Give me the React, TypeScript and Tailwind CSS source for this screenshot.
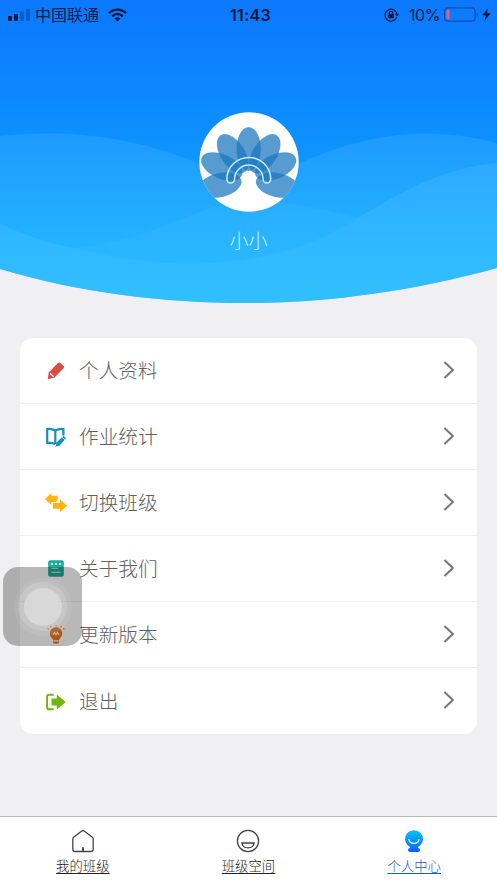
import type { ReactNode } from "react";

interface MenuItem {
  label: string;
  icon: ReactNode;
}

const menuItems: MenuItem[] = [
  { label: "个人资料", icon: <PencilIcon /> },
  { label: "作业统计", icon: <BookIcon /> },
  { label: "切换班级", icon: <SwitchIcon /> },
  { label: "关于我们", icon: <NoteIcon /> },
  { label: "更新版本", icon: <BulbIcon /> },
  { label: "退出", icon: <ExitIcon /> },
];

export default function App() {
  return (
    <div className="relative flex h-[883px] w-[497px] flex-col overflow-hidden bg-[#f0f0f2] font-['Noto_Sans_CJK_SC',sans-serif]">
      <header className="relative flex h-[304px] flex-col">
        <HeaderWaves />
        <StatusBar />
        <div className="relative mt-[84px] flex flex-col items-center">
          <Avatar />
          <div className="mt-[14px] text-[19px] leading-7 font-light text-[#c4f4ff]">小小</div>
        </div>
      </header>

      <main className="flex-1 px-5 pt-[34px]">
        <ul className="overflow-hidden rounded-[13px] bg-white">
          {menuItems.map((item) => (
            <li
              key={item.label}
              className="flex h-[66px] items-center border-b border-[#efeff1] pr-[21px] pl-6 last:border-b-0"
            >
              <span className="flex w-6 justify-center">{item.icon}</span>
              <span className="mb-px ml-[11px] flex-1 text-[19.7px] leading-none font-light text-[#606060]">
                {item.label}
              </span>
              <svg className="mb-[2px]" width="14" height="20" viewBox="0 0 14 20" fill="none" stroke="#777" strokeWidth="2">
                <path d="M2.5 2 L10.8 10 L2.5 18" />
              </svg>
            </li>
          ))}
        </ul>
      </main>

      <nav className="grid h-[67px] grid-cols-3 border-t border-[#bcbcbc] bg-white text-[13.4px] text-[#222]">
        <Tab label="我的班级" icon={<HomeIcon />} />
        <Tab label="班级空间" icon={<SmileIcon />} />
        <Tab label="个人中心" icon={<ProfileIcon />} active />
      </nav>

      <AssistiveTouch />
    </div>
  );
}

function Tab({ label, icon, active = false }: { label: string; icon: ReactNode; active?: boolean }) {
  return (
    <a className={`flex flex-col items-center pt-3 ${active ? "text-[#1458dc]" : ""}`}>
      {icon}
      <span className="mt-[2px] leading-5 font-light underline underline-offset-2">{label}</span>
    </a>
  );
}

function StatusBar() {
  return (
    <div className="relative grid h-7 grid-cols-3 items-center pr-[6px] pl-2 text-[#04214f]">
      <div className="flex items-center">
        <svg width="23" height="14" viewBox="0 0 23 14">
          <rect x="0" y="8" width="4" height="5" rx="1" fill="#04183c" />
          <rect x="6" y="6" width="4" height="7" rx="1" fill="#04183c" />
          <rect x="12" y="3.5" width="4" height="9.5" rx="1" fill="#0860cb" />
          <rect x="18" y="1" width="4" height="12" rx="1" fill="#0860cb" />
        </svg>
        <span className="mb-px ml-1 text-[16px] leading-7">中国联通</span>
        <svg className="ml-[9px]" width="19" height="14" viewBox="0 0 19 14" fill="none" stroke="#04183c" strokeWidth="2.4">
          <path d="M1 5.2 C5.8 .4 13.2 .4 18 5.2" />
          <path d="M4.2 8.3 C7.3 5.3 11.7 5.3 14.8 8.3" />
          <path d="M6.6 10.6 Q9.5 8.1 12.4 10.6 L9.5 13.5 Z" fill="#04183c" stroke="none" />
        </svg>
      </div>
      <div className="pl-[2px] text-center font-['Inter',sans-serif] text-[16px] font-semibold tracking-[0.3px] text-[#04183c]">
        11:43
      </div>
      <div className="flex items-center justify-end">
        <svg width="16" height="14" viewBox="0 0 16 14" fill="none" stroke="#04183c" strokeWidth="1.2">
          <path d="M12.7 9.2 A6 6 0 1 1 13 6.5" />
          <path d="M10.8 5.7 H15.2 L13 8.6 Z" fill="#04183c" stroke="none" />
          <rect x="4.3" y="6" width="5.4" height="4.2" rx=".5" fill="#04183c" stroke="none" />
          <path d="M5.3 6.5 V5 A1.7 1.7 0 0 1 8.7 5 V6.5" />
        </svg>
        <span className="ml-[9px] font-['Inter',sans-serif] text-[16px] tracking-[-0.4px]">10%</span>
        <svg className="ml-1" width="36" height="15" viewBox="0 0 36 15">
          <rect x=".6" y=".8" width="30.5" height="13.4" rx="3.4" fill="none" stroke="#0b4fa8" strokeWidth="1.2" />
          <path d="M32.6 5 Q35.4 7.5 32.6 10 Z" fill="#0b4fa8" />
          <path d="M5.5 2.7 V12.3 H4.2 Q2.4 12.3 2.4 10.5 V4.5 Q2.4 2.7 4.2 2.7 Z" fill="#e2607d" />
        </svg>
        <svg className="ml-[2px]" width="9" height="13" viewBox="0 0 9 13">
          <path d="M6.2 0 L.4 7.2 H3.8 L2.6 13 L8.6 5.3 H5 Z" fill="#04183c" />
        </svg>
      </div>
    </div>
  );
}

function HeaderWaves() {
  return (
    <svg className="absolute inset-0" width="497" height="304" viewBox="0 0 497 304">
      <defs>
        <linearGradient id="sky" x1="0" y1="0" x2="0" y2="304" gradientUnits="userSpaceOnUse">
          <stop offset="0" stopColor="#0c79ff" />
          <stop offset="0.1" stopColor="#0c7cff" />
          <stop offset="0.45" stopColor="#0d90ff" />
          <stop offset="0.8" stopColor="#1bafff" />
          <stop offset="1" stopColor="#29bbff" />
        </linearGradient>
        <linearGradient id="wave" x1="0" y1="130" x2="0" y2="304" gradientUnits="userSpaceOnUse">
          <stop offset="0" stopColor="#4cb5ff" stopOpacity=".28" />
          <stop offset="1" stopColor="#2cc0ff" stopOpacity=".28" />
        </linearGradient>
        <linearGradient id="foam" x1="0" y1="160" x2="0" y2="304" gradientUnits="userSpaceOnUse">
          <stop offset="0" stopColor="#5cc5ff" stopOpacity=".22" />
          <stop offset="1" stopColor="#3cc2ff" stopOpacity=".42" />
        </linearGradient>
        <clipPath id="bowl">
          <path d="M0 0 H497 V268 C410 292 325 303 245 303 C165 303 80 293 0 269 Z" />
        </clipPath>
      </defs>
      <g clipPath="url(#bowl)">
        <rect width="497" height="304" fill="url(#sky)" />
        {/* back wave: two humps meeting behind the avatar */}
        <path
          d="M0 136 C60 130 125 134 195 162 Q222 173 248 186 Q270 176 300 163 C370 132 430 126 497 143 V304 H0 Z"
          fill="url(#wave)"
        />
        {/* middle wave */}
        <path
          d="M75 248 C130 243 165 225 210 208 C245 196 290 200 358 218 C280 268 180 275 75 248 Z"
          fill="#46bdff"
          fillOpacity=".2"
        />
        {/* front wave */}
        <path
          d="M0 224 C30 237 50 244 75 248 C180 275 280 268 358 218 C410 187 445 168 497 163 V304 H0 Z"
          fill="url(#foam)"
        />
      </g>
    </svg>
  );
}

const petalAngles = [-103, 103, -66, 66, -33, 33, 0];

function Avatar() {
  return (
    <svg width="100" height="100" viewBox="0 0 100 100">
      <clipPath id="avatar">
        <circle cx="50" cy="50" r="49.7" />
      </clipPath>
      <g clipPath="url(#avatar)">
        <rect width="100" height="100" fill="#fff" />
        {petalAngles.map((angle) => (
          <ellipse
            key={angle}
            cx="49.7"
            cy="37"
            rx="12"
            ry="21.8"
            fill="#1c78c0"
            fillOpacity=".74"
            stroke="#1c78c0"
            strokeOpacity=".25"
            strokeWidth=".7"
            transform={`rotate(${angle} 49.7 66.5)`}
          />
        ))}
        <path
          d="M27.9 67.3 A21.9 21.9 0 0 1 71.7 67.3 A3.8 3.8 0 0 1 64.1 67.3 A14.3 14.3 0 0 0 35.5 67.3 A3.8 3.8 0 0 1 27.9 67.3 Z"
          fill="#1c78c0"
          fillOpacity=".3"
          stroke="#c9ecff"
          strokeWidth="1.5"
        />
      </g>
    </svg>
  );
}

function PencilIcon() {
  return (
    <svg width="18" height="18" viewBox="0 0 18 18">
      <path d="M11 .9 Q12 0 13 .7 L16.7 4.1 Q17.5 5 16.8 5.9 L7.6 15.5 L.8 17.2 L1.7 10.6 Z" fill="#dc4a40" />
      <path d="M3 11.3 L6.7 14.8" stroke="#fff" strokeWidth="1.2" />
    </svg>
  );
}

function BookIcon() {
  return (
    <svg width="20" height="20" viewBox="0 0 20 20" fill="none" stroke="#1b8fb8" strokeWidth="2.2">
      <path d="M1.2 2 Q6 1.2 9.3 3.7 Q13 1.2 17.4 2 V8.5" />
      <path d="M1.2 1 V16 Q5 15.3 9.3 17" />
      <path d="M9.3 3.5 V17" />
      <path d="M9.5 19.6 L10.7 15.2 L16 10.3 L18.6 13.1 L13.4 18.8 Z" fill="#1b8fb8" stroke="none" />
      <path d="M17 9.4 L19.5 12" strokeWidth="1.7" />
    </svg>
  );
}

function SwitchIcon() {
  return (
    <svg width="22" height="19" viewBox="0 0 22 19" fill="#ffb50b">
      <path d="M0 6 L6.3 0 V2.8 H12.7 V7.2 L10.5 9 H6.3 V12 Z" />
      <path d="M8 10.1 H15 V6.2 L22 12.7 L15 19 V15.7 H8 Z" />
    </svg>
  );
}

function NoteIcon() {
  return (
    <svg width="16" height="17" viewBox="0 0 16 17">
      <rect x=".2" y=".2" width="15.6" height="16.6" rx="2" fill="#1fa99b" />
      <g fill="#fff">
        <circle cx="4" cy="4" r="1.1" />
        <circle cx="8" cy="4" r="1.1" />
        <circle cx="12" cy="4" r="1.1" />
      </g>
      <path d="M3.4 8.3 H10.2 M3.4 12.3 H12.6" stroke="#d8f1ee" strokeWidth="1.1" />
    </svg>
  );
}

function BulbIcon() {
  return (
    <svg width="18" height="20" viewBox="0 0 18 20">
      <path d="M9 2.3 A6.2 6.2 0 0 1 13 13.2 Q12 14 12 15.5 V17 Q12 18.8 9 18.8 Q6 18.8 6 17 V15.5 Q6 14 5 13.2 A6.2 6.2 0 0 1 9 2.3 Z" fill="#f07a1c" />
      <path d="M6 10 L7.4 7.4 L9 9.8 L10.6 7.4 L12 10" fill="none" stroke="#fff" strokeWidth="1.1" />
      <path d="M6.3 15.8 H11.7" stroke="#fff" strokeWidth="1.2" />
      <path d="M9 0 V1.3 M3.6 1.2 L4.5 2.3 M14.4 1.2 L13.5 2.3 M.6 3.5 L2 4.1 M17.4 3.5 L16 4.1" stroke="#f07a1c" strokeWidth="1.2" />
    </svg>
  );
}

function ExitIcon() {
  return (
    <svg className="mt-px" width="20" height="18" viewBox="0 0 20 18">
      <path d="M7.7 1.7 H3.2 Q1.1 1.7 1.1 3.8 V14.2 Q1.1 16.3 3.2 16.3 H7.7" fill="none" stroke="#70b808" strokeWidth="2" />
      <path d="M5.5 5.5 H10.8 V1.5 L19.8 9 L10.8 16.5 V12.5 H5.5 Z" fill="#70b808" />
    </svg>
  );
}

function HomeIcon() {
  return (
    <svg width="24" height="24" viewBox="0 0 24 24" fill="none" stroke="#444" strokeWidth="1.3">
      <path d="M12 1.5 Q12.6 1.5 13.2 2 L21.4 8.2 Q22.2 8.9 22.2 9.8 V20.2 Q22.2 22.5 19.9 22.5 H4.1 Q1.8 22.5 1.8 20.2 V9.8 Q1.8 8.9 2.6 8.2 L10.8 2 Q11.4 1.5 12 1.5 Z" />
      <path d="M12 18.2 V22.5" strokeWidth="1.9" />
    </svg>
  );
}

function SmileIcon() {
  return (
    <svg width="24" height="24" viewBox="0 0 24 24" fill="none" stroke="#444" strokeWidth="1.3">
      <circle cx="12" cy="12" r="10.6" />
      <path d="M5.8 14 H18.2 Q17.6 18.8 12 18.8 Q6.4 18.8 5.8 14 Z" />
    </svg>
  );
}

function ProfileIcon() {
  return (
    <svg width="24" height="24" viewBox="0 0 24 24">
      <defs>
        <linearGradient id="profile" x1="0" y1="0" x2="0" y2="1">
          <stop offset="0" stopColor="#09c5ee" />
          <stop offset=".75" stopColor="#0878ff" />
          <stop offset="1" stopColor="#075fff" />
        </linearGradient>
      </defs>
      <path
        d="M12 1.2 A8.8 8.8 0 0 1 16.2 17.8 Q15.4 18.8 16.6 19.2 Q18 19.5 18 21 Q18 23 16 23 H8 Q6 23 6 21 Q6 19.5 7.4 19.2 Q8.6 18.8 7.8 17.8 A8.8 8.8 0 0 1 12 1.2 Z"
        fill="url(#profile)"
      />
      <path d="M7 10.7 C8 15.7 16 15.7 17 10.7" fill="none" stroke="#d8f6ff" strokeWidth="1.4" strokeLinecap="round" />
    </svg>
  );
}

/** Floating iOS AssistiveTouch button, drawn above the page */
function AssistiveTouch() {
  return (
    <div className="absolute top-[567px] left-[3px] flex size-[79px] items-center justify-center rounded-[15px] bg-black/28">
      <div className="flex size-[58px] items-center justify-center rounded-full bg-white/8">
        <div className="flex size-[49px] items-center justify-center rounded-full bg-white/15">
          <div className="size-[38px] rounded-full bg-[#dadada]/85" />
        </div>
      </div>
    </div>
  );
}
